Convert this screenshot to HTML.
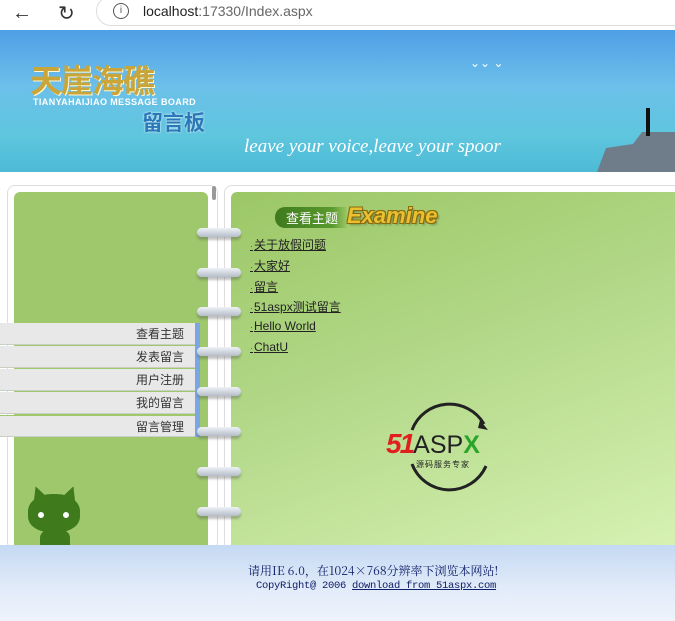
<!DOCTYPE html>
<html><head><meta charset="utf-8"><style>
*{margin:0;padding:0;box-sizing:border-box}
body{width:675px;height:621px;overflow:hidden;background:#fff;font-family:"Liberation Sans","Noto Sans CJK SC",sans-serif;position:relative}
.abs{position:absolute}
.bar{left:0;top:0;width:675px;height:30px;background:#fff}
.url{left:96px;top:-4px;width:600px;height:30px;border:1px solid #ddd;border-radius:15px;background:#fff}
.banner{left:0;top:30px;width:675px;height:142px;background:linear-gradient(180deg,#4f9fe6 0%,#6cc0ea 40%,#5ec6dd 75%,#4dbad6 100%)}
.menu div{position:absolute;left:0;width:195px;height:22px;background:#e8e8e8;border-bottom:1px solid #c9cfc4;font-size:12px;color:#333;text-align:right;padding-right:11px;line-height:22px;font-family:"Noto Sans CJK SC",sans-serif}
.ring{position:absolute;left:197px;width:44px;height:9px;border-radius:5px;background:linear-gradient(#eef2f8,#b7bdc8);box-shadow:0 3px 2px rgba(80,80,80,.35)}
.links a{position:absolute;left:250px;font-size:12px;color:#222;text-decoration:underline;font-family:"Liberation Sans","Noto Sans CJK SC",sans-serif}
.links a:before{content:"·";text-decoration:none;color:#555;font-size:9px;margin-right:1px}
</style></head><body>
<div class="abs bar"></div>
<div class="abs" style="left:12px;top:2px;font-size:20px;color:#333">←</div>
<div class="abs" style="left:58px;top:1px;font-size:20px;color:#333">↻</div>
<div class="abs url"></div>
<div class="abs" style="left:113px;top:3px;width:16px;height:16px;border:1.5px solid #555;border-radius:50%;font-size:10px;text-align:center;line-height:13px;color:#555">i</div>
<div class="abs" style="left:143px;top:3px;font-size:14px;color:#222">localhost<span style="color:#666">:17330/Index.aspx</span></div>
<div class="abs banner"></div>
<div class="abs" style="left:30px;top:56px;font-size:32px;font-weight:bold;color:#c9a53a;font-family:'Noto Sans CJK SC',sans-serif;letter-spacing:-1px;text-shadow:1px 1px 0 #fff8d0">天崖海礁</div>
<div class="abs" style="left:33px;top:97px;font-size:9px;font-weight:bold;color:#fff;letter-spacing:0.4px">TIANYAHAIJIAO MESSAGE BOARD</div>
<div class="abs" style="left:142px;top:107px;font-size:21px;font-weight:bold;color:#2b78b8;font-family:'Noto Sans CJK SC',sans-serif;text-shadow:0 0 2px #fff">留言板</div>
<div class="abs" style="left:244px;top:136px;font-size:19px;font-style:italic;color:#fff;font-family:'Liberation Serif',serif;letter-spacing:0px">leave your voice,leave your spoor</div>
<div class="abs" style="left:470px;top:56px;font-size:12px;color:#fff">⌄⌄ ⌄</div>
<div class="abs" style="left:588px;top:132px;width:90px;height:40px;background:#6f7c8a;clip-path:polygon(10% 100%,20% 40%,50% 30%,60% 0,100% 0,100% 100%)"></div>
<div class="abs" style="left:646px;top:108px;width:4px;height:28px;background:#111"></div>
<div class="abs" style="left:7px;top:185px;width:211px;height:365px;border:1px solid #ddd;border-radius:8px;background:#fff"></div>
<div class="abs" style="left:14px;top:192px;width:194px;height:360px;background:#9fc86c;border-radius:6px 6px 0 0"></div>
<div class="abs" style="left:224px;top:185px;width:460px;height:365px;border:1px solid #ddd;border-radius:8px;background:#fff"></div>
<div class="abs" style="left:231px;top:192px;width:450px;height:360px;background:linear-gradient(160deg,#9cc766 0%,#b2d888 45%,#d8f2b4 100%);border-radius:6px 0 0 0"></div>
<div class="abs" style="left:212px;top:186px;width:4px;height:14px;background:#999;border-radius:2px"></div>
<div class="menu">
<div style="top:323px">查看主题</div><div style="top:346px">发表留言</div><div style="top:369px">用户注册</div><div style="top:392px">我的留言</div><div style="top:415px;border-top:1px solid #9fc86c">留言管理</div>
</div>
<div class="abs" style="left:195px;top:323px;width:5px;height:114px;background:#7aa6e6"></div>
<div class="ring" style="top:228px"></div><div class="ring" style="top:268px"></div><div class="ring" style="top:307px"></div><div class="ring" style="top:347px"></div><div class="ring" style="top:387px"></div><div class="ring" style="top:427px"></div><div class="ring" style="top:467px"></div><div class="ring" style="top:507px"></div>
<!-- cat -->
<div class="abs" style="left:31px;top:486px;width:0;height:0;border-left:7px solid transparent;border-right:7px solid transparent;border-bottom:14px solid #3f7a1c;transform:rotate(-20deg)"></div>
<div class="abs" style="left:64px;top:486px;width:0;height:0;border-left:7px solid transparent;border-right:7px solid transparent;border-bottom:14px solid #3f7a1c;transform:rotate(20deg)"></div>
<div class="abs" style="left:28px;top:494px;width:52px;height:38px;background:#3f7a1c;border-radius:45% 45% 40% 40%"></div>
<div class="abs" style="left:34px;top:508px;width:14px;height:14px;background:#fff;border-radius:50%;border:4px solid #3f7a1c"></div>
<div class="abs" style="left:59px;top:508px;width:14px;height:14px;background:#fff;border-radius:50%;border:4px solid #3f7a1c"></div>
<div class="abs" style="left:40px;top:530px;width:30px;height:16px;background:#3f7a1c;border-radius:8px 8px 0 0"></div>
<!-- title -->
<div class="abs" style="left:275px;top:207px;width:72px;height:21px;background:linear-gradient(90deg,#3e7a1e,#5a9a2e 80%,#9cc766);border-radius:10px 0 0 10px;color:#fff;font-size:13px;line-height:21px;padding-left:11px;font-family:'Noto Sans CJK SC',sans-serif">查看主题</div>
<div class="abs" style="left:347px;top:203px;font-size:22px;font-weight:bold;font-style:italic;color:#e8c030;text-shadow:-1px -1px 0 #8a6a10,1px 1px 0 #8a6a10,1px -1px 0 #8a6a10,-1px 1px 0 #8a6a10,2px 2px 2px rgba(0,0,0,.3)">Examine</div>
<div class="links">
<a style="top:236px">关于放假问题</a><a style="top:257px">大家好</a><a style="top:278px">留言</a><a style="top:298px">51aspx测试留言</a><a style="top:319px">Hello World</a><a style="top:340px">ChatU</a>
</div>
<!-- logo -->
<svg class="abs" style="left:400px;top:400px" width="100" height="96" viewBox="0 0 100 96"><path d="M12 30 A40 40 0 0 1 84 24" fill="none" stroke="#222" stroke-width="3"/><path d="M12 64 A40 40 0 0 0 86 66" fill="none" stroke="#222" stroke-width="3"/><path d="M80 20 l8 10 l-10 -2z" fill="#222"/></svg>
<div class="abs" style="left:386px;top:428px;font-size:28px;font-weight:bold;font-style:italic;color:#e02020;letter-spacing:-2px">51<span style="color:#222;font-style:normal;font-weight:normal;font-size:25px;letter-spacing:0">ASP</span><span style="color:#2aa52a;font-style:normal;font-size:25px">X</span></div>
<div class="abs" style="left:416px;top:459px;font-size:8px;color:#222;font-family:'Noto Sans CJK SC',sans-serif;letter-spacing:1px">源码服务专家</div>
<div class="abs" style="left:0;top:545px;width:675px;height:76px;background:linear-gradient(180deg,#c5d9f3,#e3ecf9 60%,#eef3fb)"></div>
<div class="abs" style="left:248px;top:562px;font-size:12px;color:#10206a;font-family:'Noto Serif CJK SC',serif">请用IE 6.0，在1024×768分辨率下浏览本网站!</div>
<div class="abs" style="left:256px;top:580px;font-size:10.5px;color:#10206a;font-family:'Liberation Mono',monospace;letter-spacing:-0.3px">CopyRight@ 2006 <u>download from 51aspx.com</u></div>
</body></html>
